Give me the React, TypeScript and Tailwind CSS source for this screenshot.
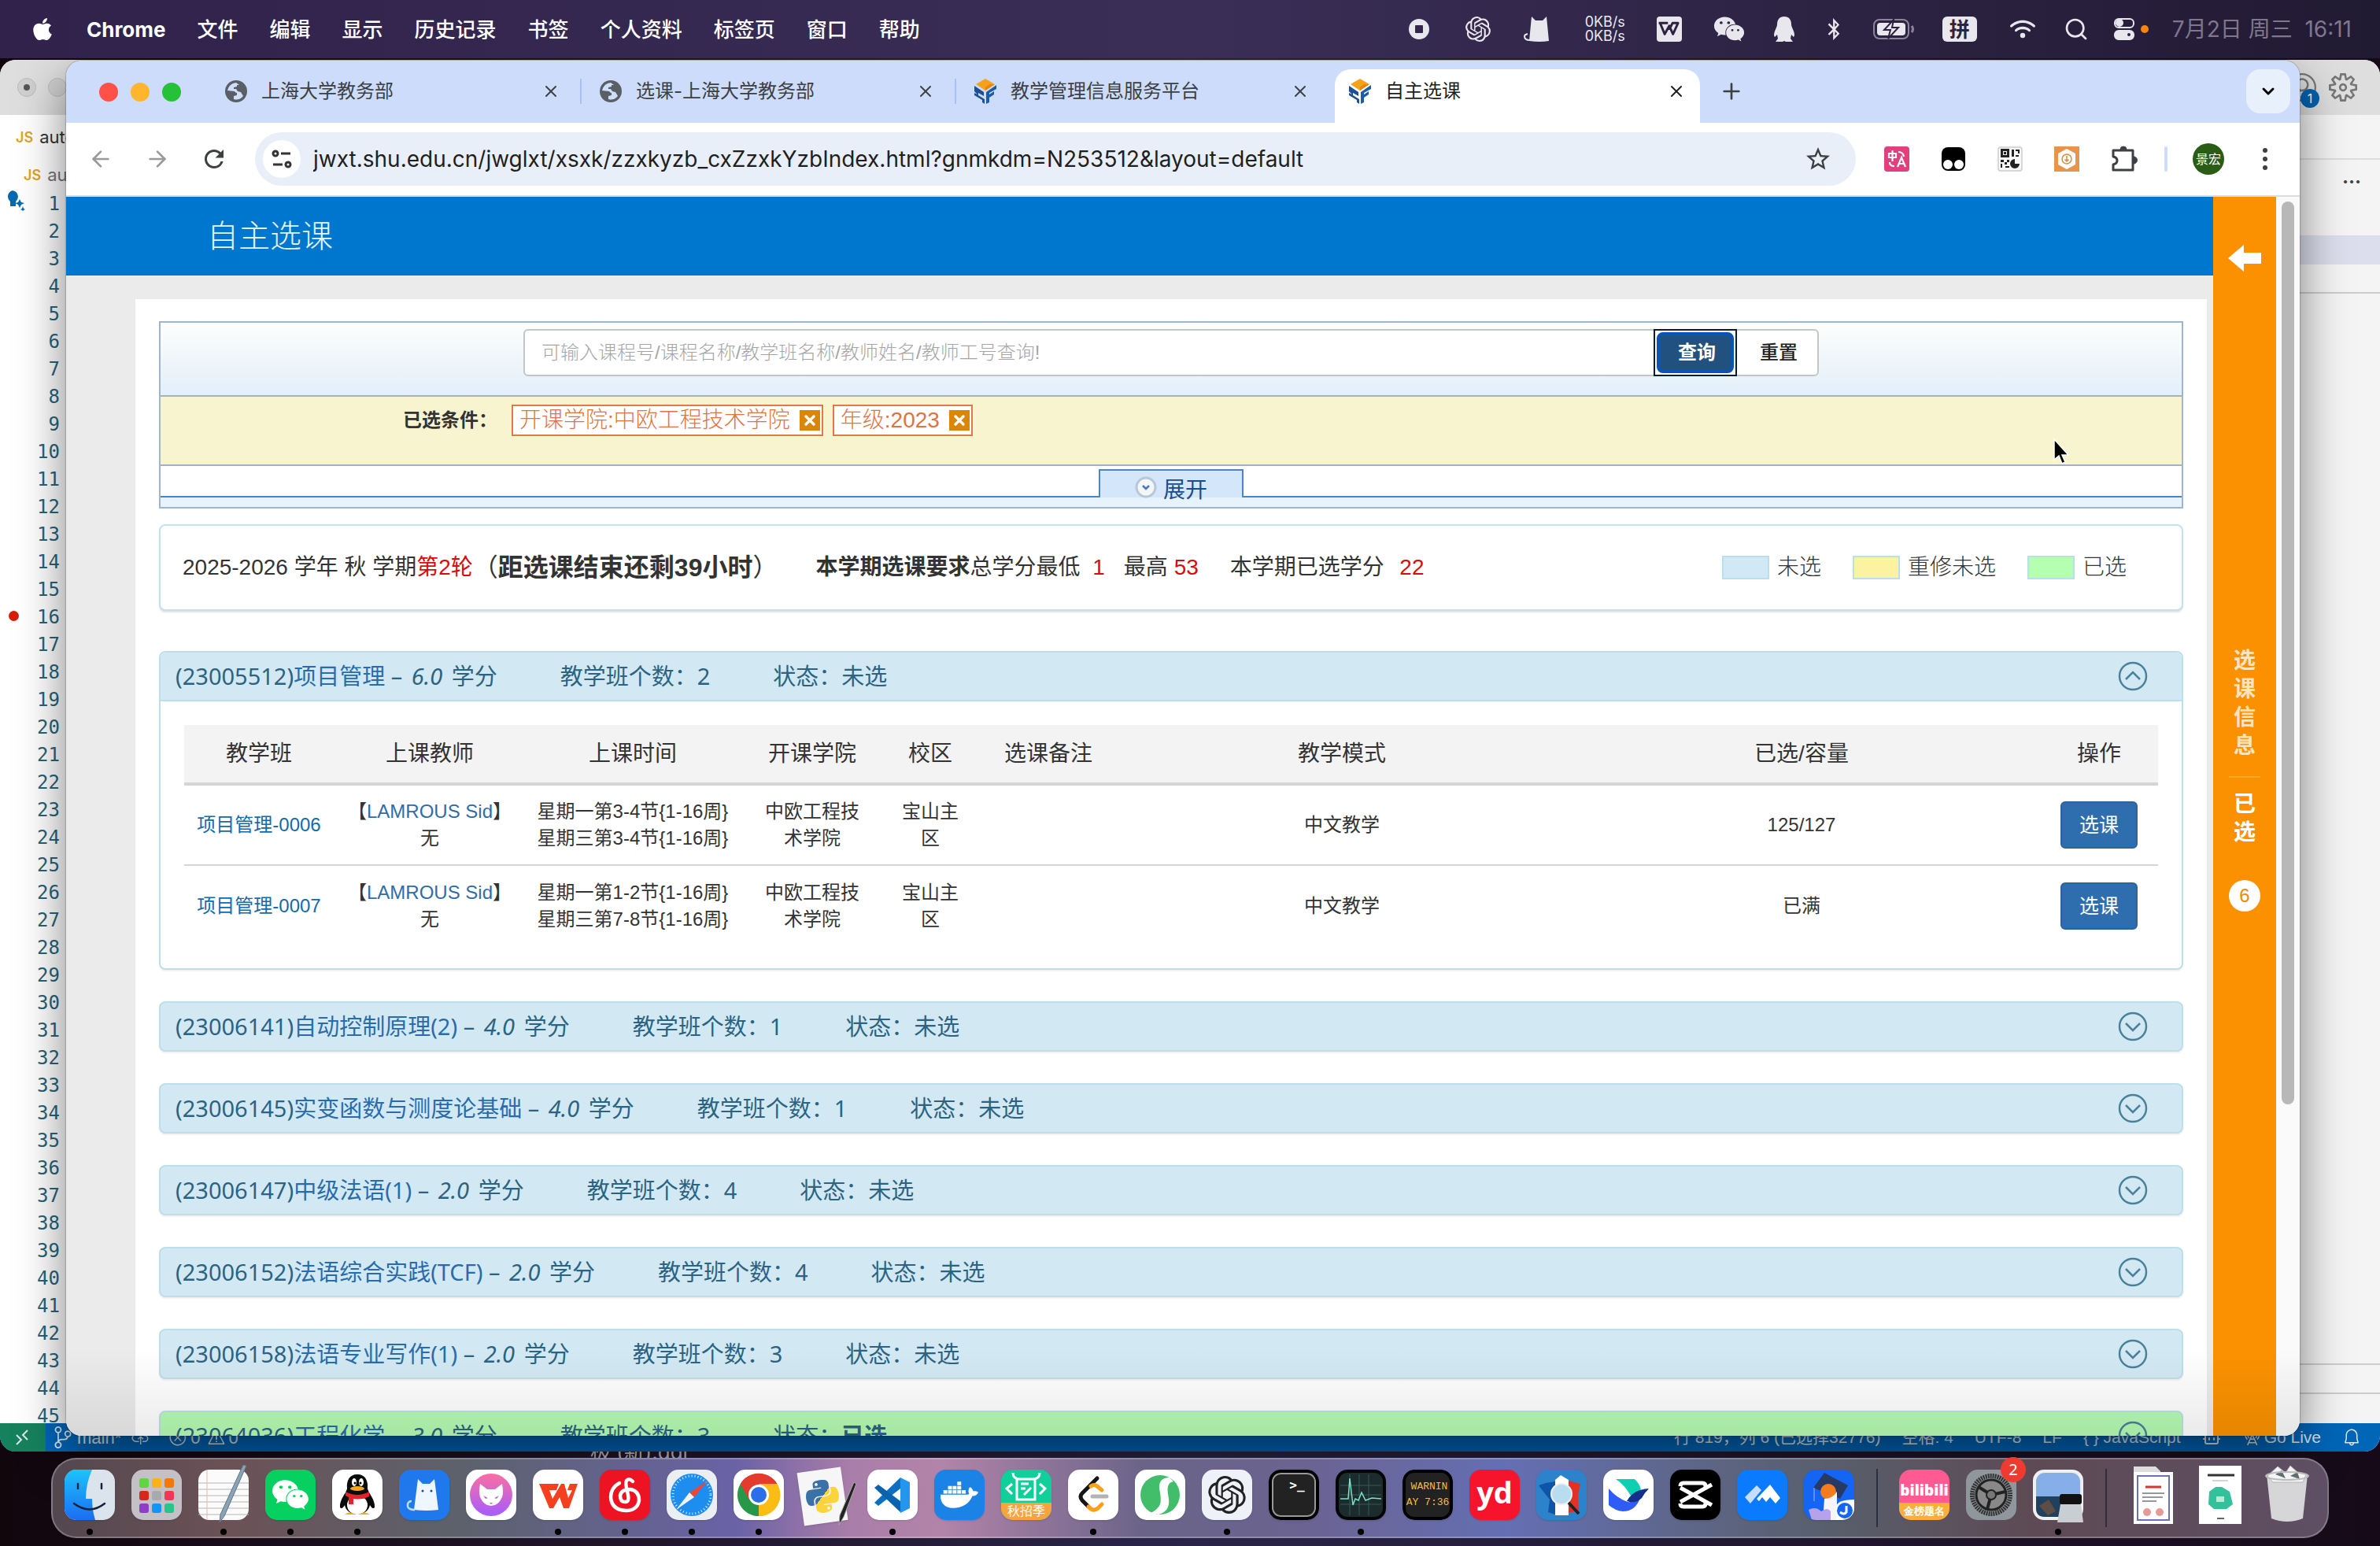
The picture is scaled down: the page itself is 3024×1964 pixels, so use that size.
import type { ReactNode } from "react";
import {
  FaApple,
  FaBluetoothB,
  FaDocker,
  FaPython,
  FaWeixin,
  FaWifi,
} from "react-icons/fa6";
import { MdRefresh, MdStarBorder } from "react-icons/md";
import { SiOpenai } from "react-icons/si";
import {
  VscAccount,
  VscBell,
  VscCloudUpload,
  VscError,
  VscRadioTower,
  VscSettingsGear,
  VscSourceControl,
  VscWarning,
} from "react-icons/vsc";
import { ArrowLeft, ArrowRight, Bot, ChevronDown, Plus, Search, X } from "lucide-react";

const UI = "font-[Inter,'Noto_Sans_CJK_SC',sans-serif]";
const PAGE = "font-['Liberation_Sans','Noto_Sans_CJK_SC',sans-serif]";
const HEI = "font-['Noto_Sans','Noto_Sans_CJK_SC',sans-serif]";

/* ---------- Menu bar ---------- */

const menus = ["文件", "编辑", "显示", "历史记录", "书签", "个人资料", "标签页", "窗口", "帮助"];

function CatGlyph({ className }: { className?: string }) {
  return (
    <svg viewBox="0 0 32 32" className={className} fill="currentColor">
      <path d="M10 0l5 5h9l5-5 3 31q-12 2-25 0z" />
      <path d="M8 30q-7 0-7-5 0-2 4-3" fill="none" stroke="currentColor" strokeWidth="2" />
    </svg>
  );
}

function WpsGlyph({ className }: { className?: string }) {
  return (
    <svg viewBox="0 0 48 34" className={className} fill="none" stroke="currentColor" strokeWidth="5">
      <path d="M1 4h20M4 4l10 24L24 10l8 18L43 4H31l-7 14" strokeLinejoin="round" />
    </svg>
  );
}

function MenuBar() {
  return (
    <header className={`relative z-30 flex h-[74px] items-center justify-between bg-linear-to-r from-[#30224a] via-[#3a2e56] to-[#211a33] pl-[38px] pr-9 text-[26px] text-white ${UI}`}>
      <nav className="flex items-center gap-10">
        <FaApple className="size-8" />
        <button type="button" className="font-bold">Chrome</button>
        {menus.map((m) => (
          <button key={m} type="button" className="font-medium">{m}</button>
        ))}
      </nav>
      <div className="flex items-center text-[#e9e7ee]">
        <svg viewBox="0 0 28 28" className="size-7"><circle cx="14" cy="14" r="13" fill="currentColor" /><rect x="9" y="9" width="10" height="10" rx="1" fill="#33274d" /></svg>
        <SiOpenai className="ml-[45px] size-8" />
        <CatGlyph className="ml-[42px] size-8" />
        <div className="ml-[46px] text-lg leading-[18px]"><p>0KB/s</p><p>0KB/s</p></div>
        <div className="ml-10 flex size-8 items-center justify-center rounded-sm bg-[#e9e7ee] text-[#2d2240]"><WpsGlyph className="w-7" /></div>
        <FaWeixin className="ml-10 size-10" />
        <svg viewBox="0 0 26 32" className="ml-[37px] h-8 w-[26px]" fill="currentColor"><path d="M13 0c6 0 9 4 9 10 0 4 4 8 4 14l-1 2-3-3-1 5 3 4H15l-2-1-2 1H2l3-4-1-5-3 3-1-2c0-6 4-10 4-14C4 4 7 0 13 0z" /></svg>
        <FaBluetoothB className="ml-9 size-7" />
        <svg viewBox="0 0 52 26" className="ml-9 h-[26px] w-[52px]" fill="none">
          <rect x="1" y="1" width="44" height="24" rx="7" stroke="#8a8399" strokeWidth="2" />
          <path d="M49 9q3 4 0 8" stroke="#8a8399" strokeWidth="3" />
          <rect x="5" y="5" width="36" height="16" rx="4" fill="currentColor" />
          <path d="M26 1L14 14h8l-3 11 13-14h-8z" fill="currentColor" stroke="#2b203f" strokeWidth="2" />
        </svg>
        <span className="ml-9 flex h-8 w-11 items-center justify-center rounded-md bg-[#e9e7ee] font-bold text-[#2d2240]">拼</span>
        <FaWifi className="ml-[42px] size-8" />
        <Search strokeWidth={2} className="ml-9 size-8" />
        <svg viewBox="0 0 26 28" className="ml-8 h-7 w-[26px]" fill="none" stroke="currentColor" strokeWidth="2">
          <rect x="1" y="1" width="24" height="11" rx="5" /><circle cx="7" cy="6" r="4" fill="currentColor" />
          <rect x="1" y="16" width="24" height="11" rx="5" fill="currentColor" /><circle cx="19" cy="21" r="3" fill="#2b203f" />
        </svg>
        <span className="ml-2 size-[10px] rounded-full bg-[#f7860f]" />
        <time className="ml-[30px] text-[28px] text-[#7f778d]">7月2日 周三&nbsp; 16:11</time>
      </div>
    </header>
  );
}

/* ---------- Editor window ---------- */

const lineNumbers = Array.from({ length: 45 }, (_, i) => i + 1);

function EditorWindow() {
  return (
    <section className={`absolute inset-x-0 top-[76px] bottom-[120px] flex flex-col overflow-hidden rounded-[20px] bg-white ${UI}`}>
      <div className="flex h-[70px] items-center justify-between bg-[#dedede] pl-[22px] pr-[29px]">
        <div className="flex gap-[15px]">
          <span className="flex size-6 items-center justify-center rounded-full border border-[#bbb] bg-[#d0d0d0]"><span className="size-2 rounded-full bg-[#555]" /></span>
          <span className="size-6 rounded-full border border-[#bbb] bg-[#d0d0d0]" />
        </div>
        <div className="flex items-center gap-4 text-[#777]">
          <span className="relative">
            <VscAccount className="size-9" />
            <span className="absolute -right-1 -bottom-2 flex size-6 items-center justify-center rounded-full bg-[#0063b1] text-base text-white">1</span>
          </span>
          <VscSettingsGear className="size-9" />
        </div>
      </div>
      <div className="flex min-h-0 flex-1 justify-between">
        <div className="w-[84px] overflow-hidden whitespace-nowrap">
          <p className="flex h-[57px] items-center gap-2 pl-5 text-[22px] text-[#333]"><b className="text-lg font-semibold text-[#e0a526]">JS</b>auto</p>
          <p className="flex h-[39px] items-center gap-2 pl-[30px] text-[22px] text-[#777]"><b className="text-lg font-semibold text-[#e0a526]">JS</b>auto</p>
          <div className="flex">
            <div className="w-10 pl-2">
              <svg viewBox="0 0 24 26" className="h-[26px] w-6" fill="#006ab1"><path d="M8 0a8 8 0 0 1 4 14v6H5v-6A8 8 0 0 1 8 0z" /><path d="M17 11l2 4 4 1-4 2-2 4-2-4-4-2 4-1zM21 20l1 3 2 1-2 1-1 1-1-1-2-1 2-1z" /></svg>
              <div className="mt-[508px] ml-[3px] size-[13px] rounded-full bg-[#d81e06]" />
            </div>
            <ol className="w-9 text-right font-['DejaVu_Sans_Mono',monospace] text-2xl leading-[35px] text-[#2a6478]">
              {lineNumbers.map((n) => <li key={n}>{n}</li>)}
            </ol>
          </div>
        </div>
        <div className="w-[102px] bg-[#f4f4f4]">
          <div className="h-[57px] border-b-2 border-[#ddd]" />
          <div className="flex h-[96px] justify-end pt-4 pr-6 text-2xl leading-none font-bold text-[#444]">···</div>
          <div className="h-[37px] bg-[#dcdeed]" />
          <div className="h-[37px] border-b-2 border-[#ccc]" />
          <div className="h-[1361px] border-b-2 border-[#ccc]" />
          <div className="h-[37px] border-b-2 border-[#ccc]" />
        </div>
      </div>
      <footer className={`flex h-9 shrink-0 items-center justify-between bg-[#0066b8] text-[22px] text-[#dde7ef] ${PAGE}`}>
        <div className="flex items-center">
          <span className="flex h-9 w-[58px] items-center justify-center bg-[#16825d]">
            <svg viewBox="0 0 20 22" className="h-[22px] w-5" fill="none" stroke="currentColor" strokeWidth="2"><path d="M2 8l6 6-6 6M16 2l-6 6 6 6" /></svg>
          </span>
          <VscSourceControl className="ml-2 size-7" />
          <span className="ml-1">main*</span>
          <VscCloudUpload className="ml-3 size-6" />
          <VscError className="ml-6 size-6" /><span className="ml-1">0</span>
          <VscWarning className="ml-2 size-6" /><span className="ml-1">0</span>
        </div>
        <div className="flex items-center gap-[27px] pr-6 text-[21px]">
          <span>行 819，列 6 (已选择32776)</span>
          <span>空格: 4</span>
          <span>UTF-8</span>
          <span>LF</span>
          <span>{"{ }"} JavaScript</span>
          <Bot className="size-6" />
          <span className="flex items-center gap-1"><VscRadioTower className="size-6" />Go Live</span>
          <VscBell className="size-6" />
        </div>
      </footer>
    </section>
  );
}

/* ---------- Browser chrome ---------- */

function GlobeIcon() {
  return (
    <svg viewBox="0 0 28 28" className="size-7 shrink-0">
      <circle cx="14" cy="14" r="14" fill="#5a5f65" />
      <path d="M14 3q-9 1-11 10l9 1q1 2 3 2v3l-4 1v4q7 2 12-4l-3-5-4-1-2-3h-3v-2l4-1v-2h3z" fill="#cfdefa" />
    </svg>
  );
}

function CubeIcon() {
  return (
    <svg viewBox="0 0 28 32" className="h-8 w-7 shrink-0">
      <path d="M14 0l12 7-12 8L2 7z" fill="#f5a11a" />
      <path d="M14 15l12-8-7 0-5 4z" fill="#e8870f" />
      <path d="M0 9l12 8v5l-7-4 0 3 8 5v6l-3-2v-3L0 21v-3l4 2-4-4z" fill="#1c4f94" />
      <path d="M28 8l-13 9v15l4-2v-6l6-4v-4l-6 4v-2l9-5z" fill="#1d5ca8" />
    </svg>
  );
}

const tabs = [
  { title: "上海大学教务部", icon: <GlobeIcon />, active: false },
  { title: "选课-上海大学教务部", icon: <GlobeIcon />, active: false },
  { title: "教学管理信息服务平台", icon: <CubeIcon />, active: false },
  { title: "自主选课", icon: <CubeIcon />, active: true },
];

function TabStrip() {
  return (
    <div className={`flex h-[79px] items-end bg-[#cddcfb] pl-[42px] pr-3 ${UI}`}>
      <div className="flex h-[79px] items-center gap-4">
        <span className="size-6 rounded-full bg-[#ff5148]" />
        <span className="size-6 rounded-full bg-[#ffb52e]" />
        <span className="size-6 rounded-full bg-[#25c138]" />
      </div>
      <div className="ml-6 flex h-[68px]">
        {tabs.map((t, i) => (
          <div
            key={t.title}
            className={
              t.active
                ? "ml-[14px] flex w-[464px] items-center rounded-t-[20px] bg-white px-[18px] pb-3 text-[#1f1f1f]"
                : "flex w-[476px] items-center pr-[18px] pl-8 pb-3 text-[#3c4043]"
            }
          >
            {t.icon}
            <button type="button" className="ml-[18px] flex-1 text-left text-2xl">{t.title}</button>
            <button type="button" aria-label="关闭"><X className="size-6" strokeWidth={2} /></button>
            {i < 2 && <span className="ml-[25px] -mr-[27px] h-8 w-[2px] bg-[#a3c3fa]" />}
          </div>
        ))}
      </div>
      <button type="button" aria-label="新标签页" className="mb-6 ml-6 text-[#3c4043]"><Plus className="size-8" strokeWidth={2} /></button>
      <button type="button" aria-label="搜索标签页" className="mb-3 ml-auto flex size-14 items-center justify-center rounded-[18px] bg-[#e8f0fc] text-black"><ChevronDown className="size-6" strokeWidth={3} /></button>
    </div>
  );
}

function Toolbar() {
  return (
    <div className={`flex h-[94px] shrink-0 items-center border-b-2 border-[#dadce0] bg-white pr-7 text-[#3c4043] ${UI}`}>
      <button type="button" aria-label="后退" className="ml-7 text-[#999]"><ArrowLeft className="size-8" /></button>
      <button type="button" aria-label="前进" className="ml-10 text-[#999]"><ArrowRight className="size-8" /></button>
      <button type="button" aria-label="刷新" className="ml-[38px]"><MdRefresh className="size-9" /></button>
      <div className="ml-[34px] flex h-[68px] flex-1 items-center rounded-full bg-[#e9eff8] pl-[10px] pr-[30px]">
        <span className="flex size-12 items-center justify-center rounded-full bg-white">
          <svg viewBox="0 0 26 26" className="size-[26px]" fill="none" stroke="#333" strokeWidth="3"><circle cx="5" cy="6" r="3" /><path d="M12 6h12M2 20h12" /><circle cx="21" cy="20" r="3" /></svg>
        </span>
        <input
          aria-label="地址栏"
          className="ml-4 flex-1 bg-transparent text-[28px] text-[#1f1f1f] outline-none"
          defaultValue="jwxt.shu.edu.cn/jwglxt/xsxk/zzxkyzb_cxZzxkYzbIndex.html?gnmkdm=N253512&layout=default"
        />
        <MdStarBorder className="size-9" />
      </div>
      <div className="ml-9 flex items-center gap-10">
        <svg viewBox="0 0 32 32" className="size-8"><rect width="32" height="32" rx="4" fill="#e23f7f" /><g fill="none" stroke="#fff" strokeWidth="2.2"><path d="M6 9h9v5H6zM10.500 5v14M18 7q6 0 7 6M7 20q0 5 6 5M17 26l5-12 5 12M19 22h6" /></g></svg>
        <svg viewBox="0 0 32 32" className="size-8"><rect x="1" y="1" width="30" height="30" rx="8" fill="#000" /><circle cx="9" cy="23" r="6" fill="#fff" /><circle cx="23" cy="23" r="6" fill="#fff" /></svg>
        <svg viewBox="0 0 32 32" className="size-8"><rect x="1" y="1" width="30" height="30" rx="3" fill="#f7f7f7" stroke="#ccc" strokeWidth="1.500" /><g fill="#222"><path d="M4 3h11v11H4zm3 3v5h5V6zM18 4h3v9h-3zM23 4h5v5h-2V6h-3zM23 11h4v2h-4zM4 17h4v3H4zM9 20h3v3H9zM12 17h3v3h-3zM4 22h2v5h4v-2h5v2H4z" /><path d="M22 16v6h6a6 6 0 1 1-6-6z" /></g><path d="M8 7h3v3H8z" fill="#222" /></svg>
        <svg viewBox="0 0 32 32" className="size-8"><rect width="32" height="32" fill="#e8954c" /><path d="M16 3l11 6v14l-11 6-11-6V9z" fill="#fff" /><circle cx="16" cy="16" r="6" fill="none" stroke="#d98c35" strokeWidth="1.500" /><path d="M16 12v7M13.500 16.500L16 19l2.500-2.500" fill="none" stroke="#d98c35" strokeWidth="1.500" /></svg>
        <svg viewBox="0 0 34 34" className="size-[34px]" fill="none" stroke="#3c4043" strokeWidth="3" strokeLinejoin="round"><path d="M3 6h25v25H3v-7q5-1 5-5t-5-5z" /><path d="M12 5a4 4 0 0 1 8 0zM29 14a4 4 0 0 1 0 9z" fill="#3c4043" strokeWidth="1" /></svg>
      </div>
      <span className="ml-[34px] h-8 w-1 rounded bg-[#cddcfb]" />
      <span className="ml-8 flex size-10 items-center justify-center rounded-full bg-[#2a5c16] text-base text-white">景宏</span>
      <svg viewBox="0 0 32 32" className="ml-9 size-8" fill="#3c4043"><circle cx="16" cy="5" r="3" /><circle cx="16" cy="16" r="3" /><circle cx="16" cy="27" r="3" /></svg>
    </div>
  );
}

/* ---------- Course page ---------- */

const courses = [
  { code: "23005512", name: "项目管理", credit: "6.0", count: 2, state: "未选" },
  { code: "23006141", name: "自动控制原理(2)", credit: "4.0", count: 1, state: "未选" },
  { code: "23006145", name: "实变函数与测度论基础", credit: "4.0", count: 1, state: "未选" },
  { code: "23006147", name: "中级法语(1)", credit: "2.0", count: 4, state: "未选" },
  { code: "23006152", name: "法语综合实践(TCF)", credit: "2.0", count: 4, state: "未选" },
  { code: "23006158", name: "法语专业写作(1)", credit: "2.0", count: 3, state: "未选" },
  { code: "23064036", name: "工程化学", credit: "3.0", count: 3, state: "已选" },
];

const classes = [
  { name: "项目管理-0006", times: ["星期一第3-4节{1-16周}", "星期三第3-4节{1-16周}"], seats: "125/127" },
  { name: "项目管理-0007", times: ["星期一第1-2节{1-16周}", "星期三第7-8节{1-16周}"], seats: "已满" },
];

const columns = [
  { label: "教学班", width: "w-[190px]" },
  { label: "上课教师", width: "w-[244px]" },
  { label: "上课时间", width: "w-[272px]" },
  { label: "开课学院", width: "w-[184px]" },
  { label: "校区", width: "w-[116px]" },
  { label: "选课备注", width: "w-[184px]" },
  { label: "教学模式", width: "w-[562px]" },
  { label: "已选/容量", width: "" },
  { label: "操作", width: "w-[150px]" },
];

const legend = [
  { label: "未选", color: "bg-[#d0e9f5]" },
  { label: "重修未选", color: "bg-[#fcf3a1]" },
  { label: "已选", color: "bg-[#b4ffb0]" },
];

function Chip({ children }: { children: ReactNode }) {
  return (
    <span className="flex h-10 items-center gap-3 border-2 border-[#e07a48] bg-white pl-2 pr-[2px] text-[28px] font-light text-[#e0733f]">
      {children}
      <button type="button" aria-label="移除" className="flex size-[26px] items-center justify-center bg-[#d98708] text-white"><X className="size-5" strokeWidth={4} /></button>
    </span>
  );
}

function SearchPanel() {
  return (
    <div className="border-2 border-[#9fb6cc]">
      <div className="flex h-[94px] justify-center border-b-2 border-[#9fb3c3] bg-linear-to-b from-[#fdfefb] to-[#e2effa] pt-2">
        <div className="flex h-[60px] w-[1646px] rounded-md border-2 border-[#c3c6c8] bg-white text-2xl">
          <input aria-label="课程查询" className="flex-1 px-[21px] font-light text-[#333] outline-none placeholder:text-[#a5a5a5]" placeholder="可输入课程号/课程名称/教学班名称/教师姓名/教师工号查询!" />
          <button type="button" className="-my-[2px] w-[106px] border-2 border-[#0a1d30] bg-white p-[2px] font-bold text-white">
            <span className="flex h-full items-center justify-center rounded-lg border-4 border-[#0b54b5] bg-[#21527f] pl-1">查询</span>
          </button>
          <button type="button" className="w-[102px] pl-1 font-medium text-[#222]">重置</button>
        </div>
      </div>
      <div className="flex h-[88px] items-start gap-3 border-b-2 border-[#9fb3c3] bg-[#f9f4d0] pt-[10px] pl-[308px]">
        <span className="mr-[6px] text-2xl leading-10 font-bold text-[#333]">已选条件：</span>
        <Chip>开课学院:中欧工程技术学院</Chip>
        <Chip>年级:2023</Chip>
      </div>
      <div className="flex h-10 items-end justify-center border-b-2 border-[#4a86c5]">
        <button type="button" className="-mb-[2px] flex h-9 w-[184px] items-center justify-center gap-2 border-2 border-b-0 border-[#4a86c5] bg-[#d3e6fa] pt-4 text-[28px] text-[#1c4b8a]">
          <svg viewBox="0 0 28 28" className="-mt-2 size-7"><circle cx="14" cy="14" r="12" fill="#f4f7fa" stroke="#b9c8d8" strokeWidth="3" /><path d="M10 12l4 4 4-4" fill="none" stroke="#4a78b0" strokeWidth="2.500" /></svg>
          展开
        </button>
      </div>
      <div className="h-3 bg-[#e6f2fc]" />
    </div>
  );
}

function InfoPanel() {
  return (
    <div className="mt-5 flex h-[110px] items-center justify-between rounded-lg border-2 border-[#c0e3ec] bg-white pr-[70px] pl-7 text-[28px] text-[#333] shadow-[0_2px_2px_rgba(0,0,0,0.12)]">
      <p className="flex items-center whitespace-pre">
        2025-2026 学年 秋 学期<span className="text-[#d90c0c]">第2轮</span>
        <b className="text-[32px]"><span className="font-normal">（</span>距选课结束还剩39小时<span className="font-normal">）</span></b>
        <b className="ml-12">本学期选课要求</b>总学分最低 <span className="ml-2 text-[#d90c0c]">1</span>
        <span className="ml-6">最高 <span className="text-[#d90c0c]">53</span></span>
        <span className="ml-10">本学期已选学分&nbsp; <span className="ml-1 text-[#d90c0c]">22</span></span>
      </p>
      <div className="flex gap-10 font-light">
        {legend.map((l) => (
          <span key={l.label} className="flex items-center gap-[10px]">
            <span className={`h-[30px] w-[60px] border-2 border-[#b8e0e8] ${l.color}`} />
            {l.label}
          </span>
        ))}
      </div>
    </div>
  );
}

function CourseBar({ course, open }: { course: (typeof courses)[number]; open?: boolean }) {
  return (
    <div className={`flex h-[60px] items-center gap-[80px] pr-[43px] pl-[19px] text-[29px] text-[#2c6382] ${HEI}`}>
      <h4 className="whitespace-pre">
        ({course.code})<a href="#course" className="text-[#2a6cab]">{course.name}</a> – <i className="mx-1">{course.credit}</i> 学分
      </h4>
      <span>教学班个数：{course.count}</span>
      <span className="flex-1">状态：<span className={course.state === "已选" ? "font-bold" : ""}>{course.state}</span></span>
      <button type="button" aria-label={open ? "收起" : "展开"}>
        <svg viewBox="0 0 38 38" className="size-[38px]" fill="none" stroke="#4b819b" strokeWidth="2.500">
          <circle cx="19" cy="19" r="17" />
          <path d={open ? "M10 23l9-9 9 9" : "M10 15l9 9 9-9"} />
        </svg>
      </button>
    </div>
  );
}

function ClassTable() {
  return (
    <table className="w-full table-fixed text-center text-2xl leading-[34px] text-[#333]">
      <thead>
        <tr className="h-[75px] border-b-4 border-[#d5d5d5] bg-[#f3f3f3] text-[28px]">
          {columns.map((c) => <th key={c.label} className={`font-normal ${c.width}`}>{c.label}</th>)}
        </tr>
      </thead>
      <tbody>
        {classes.map((c) => (
          <tr key={c.name} className="h-[103px] border-b-2 border-[#d5d5d5] last:border-b-0">
            <td><a href="#class" className="text-[#136aad]">{c.name}</a></td>
            <td className="whitespace-nowrap">【<a href="#teacher" className="text-[#2f6da8]">LAMROUS Sid</a>】<br />无</td>
            <td className="whitespace-nowrap">{c.times[0]}<br />{c.times[1]}</td>
            <td className="px-6">中欧工程技术学院</td>
            <td className="px-5">宝山主区</td>
            <td />
            <td>中文教学</td>
            <td>{c.seats}</td>
            <td><button type="button" className="h-[60px] w-[98px] rounded-md border-2 border-[#2e6299] bg-[#2f6eae] align-middle text-[25px] text-white">选课</button></td>
          </tr>
        ))}
      </tbody>
    </table>
  );
}

function CoursePage() {
  return (
    <main className={`flex min-w-0 flex-1 flex-col bg-[#ebebeb] ${PAGE}`}>
      <h1 className="flex h-[100px] shrink-0 items-center bg-[#0077cf] pl-[179px] text-[40px] font-light text-[#e4f6ff]">自主选课</h1>
      <div className="mt-[30px] mr-2 ml-[88px] flex-1 bg-white px-[30px] pt-7">
        <SearchPanel />
        <InfoPanel />
        <div className="mt-[51px] space-y-10">
          {courses.map((c, i) => (
            <section
              key={c.code}
              className={`overflow-hidden rounded-lg border-2 border-[#bcdfeb] shadow-[0_2px_2px_rgba(0,0,0,0.06)] ${
                i === 0 ? "bg-white" : c.state === "已选" ? "bg-[#b6fbb3]" : "bg-[#d2e9f3]"
              }`}
            >
              {i === 0 ? (
                <>
                  <div className="border-b-2 border-[#bcdfeb] bg-[#d2e9f3]"><CourseBar course={c} open /></div>
                  <div className="px-[30px] pt-[30px] pb-7"><ClassTable /></div>
                </>
              ) : (
                <CourseBar course={c} />
              )}
            </section>
          ))}
        </div>
      </div>
    </main>
  );
}

function SideRail() {
  return (
    <aside className={`flex w-20 shrink-0 flex-col items-center bg-[#fb9100] pt-[60px] text-[28px] leading-9 font-bold text-white ${PAGE}`}>
      <button type="button" aria-label="返回">
        <svg viewBox="0 0 42 36" className="h-9 w-[42px]" fill="#fff"><path d="M0 18L20 1v10h22v14H20v10z" /></svg>
      </button>
      <div className="mt-[476px] w-7 text-center text-[#ffe4c0]">选课信息</div>
      <hr className="mt-5 mb-4 w-10 border-t-2 border-[#ffa627]" />
      <div className="w-7 text-center">已选</div>
      <span className="mt-[42px] flex size-10 items-center justify-center rounded-full bg-white text-2xl font-normal text-[#f08a00]">6</span>
    </aside>
  );
}

function BrowserWindow() {
  return (
    <section className="absolute top-[77px] right-[102px] bottom-[140px] left-[84px] flex flex-col overflow-hidden rounded-[20px] bg-white shadow-[0_24px_60px_rgba(0,0,0,0.5),0_0_2px_rgba(0,0,0,0.6)]">
      <TabStrip />
      <Toolbar />
      <div className="flex min-h-0 flex-1">
        <CoursePage />
        <SideRail />
        <div className="w-[30px] shrink-0 bg-[#fafafa] px-[7px] pt-[6px]"><div className="h-[1147px] rounded-full bg-[#b8b8b8]" /></div>
      </div>
      <div className="pointer-events-none absolute inset-x-0 bottom-0 h-[110px] bg-linear-to-b from-transparent to-black/8" />
      <svg viewBox="0 0 20 34" className="absolute top-[480px] right-[293px] h-[34px] w-5"><path d="M1 1v26l6-5 4 10 4-2-4-9h8z" fill="#000" stroke="#fff" strokeWidth="1.500" /></svg>
    </section>
  );
}

/* ---------- Dock ---------- */

const launchpad = ["#5fd63f", "#fbb214", "#f2780c", "#d8261c", "#a7abae", "#f5345a", "#8d3fc4", "#1495f5", "#28c48c"];

const dockApps: { id: string; running?: boolean; bare?: boolean; art: ReactNode }[] = [
  {
    id: "finder", running: true,
    art: <svg viewBox="0 0 64 64"><defs><linearGradient id="finder" x1="0" y1="0" x2="0" y2="1"><stop stopColor="#1cc4fb" /><stop offset="1" stopColor="#1c6cf2" /></linearGradient></defs><rect width="64" height="64" fill="#dbe3ec" /><path d="M0 0h35q-8 18-8 37h8q0 14 4 27H0z" fill="url(#finder)" /><path d="M17 18v6M47 18v6M12 43q20 15 39 0" fill="none" stroke="#14233c" strokeWidth="2.500" strokeLinecap="round" /></svg>,
  },
  {
    id: "launchpad",
    art: <svg viewBox="0 0 64 64"><rect width="64" height="64" fill="#c3c1c6" />{launchpad.map((c, i) => <rect key={c} x={10 + (i % 3) * 16} y={11 + Math.floor(i / 3) * 16} width="12" height="12" rx="3" fill={c} />)}</svg>,
  },
  {
    id: "textedit", running: true, bare: true,
    art: <svg viewBox="0 0 64 64" className="overflow-visible"><rect width="64" height="64" rx="14" fill="#fbfbfb" /><path d="M0 17h64M0 25h64M0 33h64M0 41h64M0 49h64M0 57h64" stroke="#b5b5b5" /><path d="M11 0v64" stroke="#f0b3a6" /><path d="M57-6l4 1-28 64-6 8 1-10z" fill="#8ba3b5" stroke="#5d7485" /></svg>,
  },
  { id: "wechat", running: true, art: <div className="flex size-full items-center justify-center bg-[#06d160]"><FaWeixin className="size-12 text-white" /></div> },
  {
    id: "qq", running: true,
    art: <svg viewBox="0 0 64 64"><rect width="64" height="64" fill="#fff" /><path d="M32 6c10 0 14 8 13 18 1 6 10 14 9 24-2 3-5-1-6-3-1 6-7 12-16 12s-15-6-16-12c-1 2-4 6-6 3-1-10 8-18 9-24C18 14 22 6 32 6z" fill="#0b0b0b" /><ellipse cx="32" cy="45" rx="13" ry="12" fill="#fff" /><ellipse cx="28" cy="16" rx="3" ry="5" fill="#fff" /><ellipse cx="37" cy="16" rx="3" ry="5" fill="#fff" /><circle cx="29" cy="17" r="1.500" /><circle cx="36" cy="17" r="1.500" /><ellipse cx="32" cy="24" rx="9" ry="3" fill="#f5a81c" /><path d="M17 28q15 8 30 0v6q-9 5-20 3v7h-6v-9l-4-2z" fill="#e2232c" /><path d="M16 57q6-5 14 0zM34 57q6-5 14 0z" fill="#f5a81c" /></svg>,
  },
  {
    id: "clash",
    art: <svg viewBox="0 0 64 64"><rect width="64" height="64" fill="#1f78ec" /><path d="M24 12l6 6h9l6-6 5 39q-15 2-31 0z" fill="#eef6ff" /><path d="M20 51q-10 0-9-7 1-4 5-4" fill="none" stroke="#bcdcff" strokeWidth="2.500" /><circle cx="30" cy="27" r="1.500" fill="#1c4d8d" /><circle cx="41" cy="27" r="1.500" fill="#1c4d8d" /></svg>,
  },
  {
    id: "meow",
    art: <svg viewBox="0 0 64 64"><defs><linearGradient id="meow" x1="0" y1="0" x2="0" y2="1"><stop stopColor="#fb6fa2" /><stop offset="1" stopColor="#a55cff" /></linearGradient></defs><rect width="64" height="64" fill="#fff" /><circle cx="32" cy="32" r="27" fill="url(#meow)" /><path d="M18 18l9 7h10l9-7q2 12 0 17-5 11-14 11T18 35q-2-8 0-17z" fill="#fff" /><path d="M22 33l6 3-3 1zM42 33l-6 3 3 1zM30 42h4l-2 2z" fill="#b060e0" /></svg>,
  },
  {
    id: "wps", running: true,
    art: <svg viewBox="0 0 64 64"><rect width="64" height="64" fill="#fff" /><path d="M8 18h25l-3 8h-9l4 11 11-19h4l5 18 5-10h-6l3-8h10L46 49h-7l-5-14-8 14h-5z" fill="#f5401f" /></svg>,
  },
  {
    id: "netease", running: true,
    art: <svg viewBox="0 0 64 64"><rect width="64" height="64" fill="#ee1322" /><path d="M42 15q-5-5-8-1-2 3 2 18 2 9-4 9t-6-8q1-8 13-8 11 2 11 14-2 13-17 13-18-1-19-17 0-12 11-18" fill="none" stroke="#fff" strokeWidth="4.500" strokeLinecap="round" /></svg>,
  },
  {
    id: "safari", running: true,
    art: <svg viewBox="0 0 64 64"><rect width="64" height="64" fill="#eceff2" /><circle cx="32" cy="32" r="27" fill="#1d8df0" /><circle cx="32" cy="32" r="24" fill="none" stroke="#d9ecfd" strokeWidth="3" strokeDasharray="1 3" /><path d="M52 14L29 29l6 6z" fill="#f04438" /><path d="M12 51l17-22 6 6z" fill="#f5f5f5" /></svg>,
  },
  {
    id: "chrome", running: true,
    art: <svg viewBox="0 0 64 64"><rect width="64" height="64" fill="#fff" /><path d="M32 32L8.600 18.500A27 27 0 0 1 55.400 18.500z" fill="#e33b2e" /><path d="M32 32L55.400 18.500A27 27 0 0 1 32 59z" fill="#fbbc14" /><path d="M32 32v27A27 27 0 0 1 8.600 18.500z" fill="#279847" /><path d="M32 18h23.500A27 27 0 0 1 32 59l11-20z" fill="#fbbc14" /><path d="M32 18h23.500A27 27 0 0 0 8.600 18.500L20 38z" fill="#e33b2e" /><circle cx="32" cy="32" r="13" fill="#fff" /><circle cx="32" cy="32" r="10" fill="#2c6ee8" /></svg>,
  },
  {
    id: "idle", bare: true,
    art: (
      <div className="relative size-16">
        <div className="flex h-[68px] w-14 -rotate-8 items-center justify-center bg-[#f6f6f6] shadow"><FaPython fill="url(#python)" className="size-12" /></div>
        <svg viewBox="0 0 26 56" className="absolute -right-2 top-4 h-14 w-[26px]"><defs><linearGradient id="python" x1="0" y1="0" x2="1" y2="1"><stop offset=".5" stopColor="#3a72a8" /><stop offset=".5" stopColor="#fbd43c" /></linearGradient></defs><path d="M22 0l3 2L9 44 3 54l1-12z" fill="#222" stroke="#aaa" /></svg>
      </div>
    ),
  },
  {
    id: "vscode", running: true,
    art: <svg viewBox="0 0 64 64"><rect width="64" height="64" fill="#fff" /><path d="M42 10v14L14 46l-5-4z" fill="#0a6fc2" /><path d="M42 54V40L14 19l-5 4z" fill="#0b62ad" /><path d="M42 10l12 6v33l-12 6z" fill="#2496ed" /></svg>,
  },
  { id: "docker", art: <div className="flex size-full items-center justify-center bg-[#1b82e6]"><FaDocker className="size-12 text-white" /></div> },
  {
    id: "nowcoder",
    art: <div className="flex size-full flex-col bg-[#0fcf9b]"><svg viewBox="0 0 64 42" className="h-[42px] w-16" fill="none" stroke="#fff" strokeWidth="3"><path d="M20 12h23v26H20zM25 18h10M25 24h6M29 32l9-9M14 18l-7 6 7 7M49 18l7 6-7 7M15 4q0 8 9 8M49 4q0 8-9 8" /></svg><span className="flex-1 bg-[#f8a43c] text-center text-base leading-5 text-white">秋招季</span></div>,
  },
  { id: "leetcode", running: true, art: <div className="flex size-full items-center justify-center bg-white"><svg viewBox="0 0 64 64" fill="none" strokeWidth="5" strokeLinecap="round"><path d="M37 11L18 30q-4 4 0 9l8 8" stroke="#151515" /><path d="M29 21q4-3 8 0l6 5M26 47q6 7 12 2l5-5" stroke="#f9a01b" /><path d="M31 34h18" stroke="#b3b3b3" /></svg></div> },
  {
    id: "surge",
    art: <svg viewBox="0 0 64 64"><rect width="64" height="64" fill="#fff" /><circle cx="32" cy="32" r="25" fill="#42be6b" /><path d="M44 10q-14 0-13 14 3 14 1 20-3 7-12 11l10 2q15-4 13-20-3-15 0-18 1-3 6-4z" fill="#fff" /></svg>,
  },
  { id: "chatgpt", running: true, art: <div className="flex size-full items-center justify-center bg-[#eef2f8]"><SiOpenai className="size-12 text-[#222]" /></div> },
  {
    id: "terminal",
    art: <div className="size-full rounded-[15px] border-4 border-[#000] bg-[#222] pt-1 pl-2 font-['DejaVu_Sans_Mono',monospace] text-base font-bold text-white ring-2 ring-[#999] ring-inset">&gt;_</div>,
  },
  {
    id: "monitor", running: true,
    art: <svg viewBox="0 0 64 64"><rect x="1" y="1" width="62" height="62" rx="14" fill="#1c2b2b" stroke="#050505" strokeWidth="6" /><path d="M6 20h52M6 32h52M6 44h52M18 6v52M30 6v52M42 6v52" stroke="#2f5e55" /><path d="M6 37h10l2-26 4 34 3-8 4 2 4-10 5 10 8-3 12 1" fill="none" stroke="#7fe0c8" strokeWidth="1.500" /></svg>,
  },
  {
    id: "console",
    art: <div className="flex size-full flex-col justify-center overflow-hidden rounded-[15px] border-4 border-black bg-[#222] font-['Liberation_Mono',monospace] text-[13px] leading-[20px] whitespace-nowrap text-[#f5bf2f]"><span className="pl-1">WARNIN</span><span>AY 7:36</span></div>,
  },
  { id: "youdao", art: <div className="flex size-full items-center justify-center bg-[#f6142c] pb-2 font-['Open_Sans',sans-serif] text-[38px] font-bold text-white">yd</div> },
  {
    id: "frhelper",
    art: <svg viewBox="0 0 64 64"><rect width="64" height="64" fill="#2c83cc" /><path d="M3 20l9-3 12-2v42l-9-3 2-16-8-10z" fill="#0e55a8" /><path d="M24 13l7-6 10 6v45H24z" fill="#fff" /><path d="M41 14l15 4-3 14 1 20-13 3z" fill="#e33225" /><circle cx="32" cy="31" r="13" fill="#b8dcf0" stroke="#eee" strokeWidth="2" /><path d="M41 42l13 14" stroke="#222" strokeWidth="4" /></svg>,
  },
  {
    id: "lark",
    art: <svg viewBox="0 0 64 64"><rect width="64" height="64" fill="#fff" /><path d="M16 12h24q8 8 8 15l-13 6Q27 19 16 12z" fill="#0cd0b0" /><path d="M7 24q10 12 24 17 8 1 16-5-6 17-22 17-10-1-18-8z" fill="#2f5cf6" /><path d="M30 40q8-15 28-16-5 5-9 12-8 8-19 4z" fill="#13318c" /></svg>,
  },
  {
    id: "capcut",
    art: <svg viewBox="0 0 64 64"><rect width="64" height="64" fill="#000" /><path d="M13 21q0-4 4-4h24q4 0 4 4v1M13 43q0 4 4 4h24q4 0 4-4v-1M13 23l40 22M13 41l40-22" fill="none" stroke="#fff" strokeWidth="5" /></svg>,
  },
  {
    id: "mumble",
    art: <svg viewBox="0 0 64 64"><rect width="64" height="64" fill="#0a7bff" /><path d="M10 35l15-15 6 6-14 17z" fill="#c8deff" /><path d="M25 37l17-18 13 17-6 7-7-8-5 6-5-6-4 5z" fill="#fff" /></svg>,
  },
  {
    id: "goose",
    art: <svg viewBox="0 0 64 64"><rect width="64" height="64" fill="#1565f5" /><path d="M26 4l30 16-10 17-34-14z" fill="#283a63" /><path d="M13 23v17" stroke="#9fb6e8" /><circle cx="31" cy="28" r="10" fill="#f57c1c" /><path d="M26 37q10 0 16-9v36H24z" fill="#f7f5f8" /><path d="M6 51q9-5 16 2 8-6 12 0v11H10z" fill="#b6a2ea" /><path d="M41 64V48q0-10 23-10v26z" fill="#fff" /><circle cx="52" cy="52" r="10" fill="#1565f5" /><path d="M54 46v8q-3 4-8 0" fill="none" stroke="#fff" strokeWidth="3" /></svg>,
  },
];

function DockApp({ app }: { app: (typeof dockApps)[number] }) {
  return (
    <button type="button" aria-label={app.id} className="flex w-16 flex-col items-center">
      <span className={app.bare ? "block size-16" : "block size-16 overflow-hidden rounded-[15px] shadow"}>{app.art}</span>
      {app.running && <span className="mt-[11px] size-2 rounded-full bg-black" />}
    </button>
  );
}

function Dock() {
  return (
    <nav className="absolute bottom-[10px] left-1/2 z-20 flex h-[102px] -translate-x-1/2 items-start gap-[21px] rounded-[32px] border-2 border-white/25 bg-[linear-gradient(90deg,#54474f_0%,#6b5257_8%,#5c626c_18%,#6a62a6_30%,#a87da8_35%,#b384aa_39%,#6a6488_48%,#6b6391_55%,#646fb4_64%,#5e6688_72%,#585f6c_78%,#5d4a54_87%,#5f4f64_100%)] pr-[19px] pl-[15px] pt-[13px]">
      {dockApps.map((a) => <DockApp key={a.id} app={a} />)}
      <span className="-mt-[1px] -mr-[7px] ml-[7px] h-[74px] w-[15px] border-l-2 border-[#2c2f42]" />
      <button type="button" aria-label="bilibili" className="flex size-16 flex-col overflow-hidden rounded-[15px] bg-[#ff5a92] text-white">
        <span className="w-full pt-[10px] font-['Open_Sans',sans-serif] text-[19px] leading-8 font-extrabold">bilibili</span>
        <span className="w-full flex-1 bg-[#f9b03a] text-[13px] leading-5 font-bold">金榜题名</span>
      </button>
      <button type="button" aria-label="系统设置" className="relative flex size-16 items-center justify-center rounded-[15px] bg-[#8f979c]">
        <svg viewBox="0 0 60 60" className="size-[60px]" fill="none"><circle cx="30" cy="30" r="24" stroke="#333" strokeWidth="6" strokeDasharray="2 1" /><circle cx="30" cy="30" r="19" fill="#888" stroke="#222" strokeWidth="3" /><path d="M30 30L14 20M30 30l18-4M30 30l-5 18" stroke="#222" strokeWidth="4" /><circle cx="30" cy="30" r="6" fill="#777" stroke="#222" strokeWidth="2" /></svg>
        <span className="absolute -top-4 -right-3 flex size-8 items-center justify-center rounded-full bg-[#ee3b30] text-xl text-white">2</span>
      </button>
      <button type="button" aria-label="预览" className="flex w-16 flex-col items-center">
        <svg viewBox="0 0 64 64" className="size-16 overflow-visible"><rect width="64" height="64" rx="14" fill="#f0f0f0" /><rect x="4" y="4" width="56" height="56" rx="11" fill="#86aee8" /><path d="M4 34h56v16q0 10-11 10H15Q4 60 4 49z" fill="#21405e" /><path d="M8 46l12-8 9 15-10 5z" fill="#5d4d44" /><rect x="34" y="31" width="28" height="13" rx="3" fill="#111" /><path d="M35 44h26l3 23H31z" fill="#c9ced2" /></svg>
        <span className="mt-[11px] size-2 rounded-full bg-black" />
      </button>
      <span className="-mt-[1px] -mr-[7px] ml-[7px] h-[74px] w-[15px] border-l-2 border-[#2c2f42]" />
      <svg viewBox="0 0 64 74" className="-mt-1 h-[74px] w-16"><path d="M7 0h28l6 6v4H7z" fill="#ddd" /><rect x="7" y="7" width="50" height="66" fill="#fff" /><rect x="12" y="12" width="40" height="56" fill="none" stroke="#6772b8" strokeWidth="2" /><path d="M22 26h20" stroke="#d33" strokeWidth="3" /><path d="M18 34h28M18 39h26M18 44h18" stroke="#777" strokeWidth="1.500" /><circle cx="24" cy="58" r="5" fill="#e59a98" /><circle cx="40" cy="58" r="5" fill="#e59a98" /></svg>
      <svg viewBox="0 0 64 76" className="-mt-[6px] h-[76px] w-16"><rect x="5" y="1" width="54" height="74" fill="#fff" /><path d="M16 13h34" stroke="#333" strokeWidth="3" /><path d="M22 20h20" stroke="#aaa" /><path d="M18 34l8-6 8 0 10 6 4 16-8 6H24l-7-6z" fill="#34c09a" /><path d="M27 40h10v7H27z" fill="#bfead9" /><path d="M28 68h9" stroke="#666" strokeWidth="2" /></svg>
      <svg viewBox="0 0 64 76" className="-mt-[6px] h-[76px] w-16"><path d="M6 12h52l-6 56q-20 8-40 0z" fill="#dfe0e0" opacity=".93" /><path d="M7 14L20 2l10 8 6-9 10 9 10 2-4 10H14z" fill="#f4f4f4" stroke="#b7b7b7" /><path d="M17 12l8-5 5 10zM36 14l9-5 3 9z" fill="#5e6e73" /><ellipse cx="32" cy="14" rx="27" ry="5" fill="none" stroke="#bcbcbc" strokeWidth="2" /></svg>
    </nav>
  );
}

export default function App() {
  return (
    <div className="relative h-screen w-full overflow-hidden bg-linear-to-r from-[#12060d] via-[#2a2548] to-[#160a18]">
      <MenuBar />
      <p className={`absolute bottom-[100px] left-[750px] text-[26px] text-[#bdbdc4] ${UI}`}>极 (新).ddl</p>
      <EditorWindow />
      <BrowserWindow />
      <Dock />
    </div>
  );
}
